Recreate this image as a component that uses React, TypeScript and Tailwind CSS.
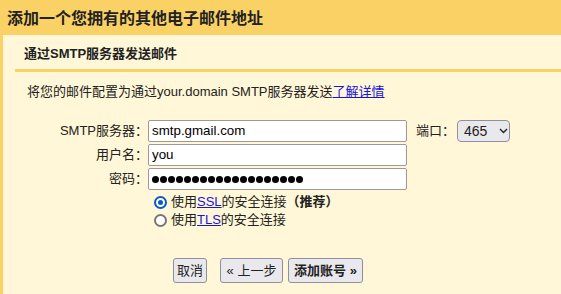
import React from "react";

const font = { fontFamily: '"Liberation Sans", Arial, "Noto Sans CJK SC", sans-serif' };

function Radio({ checked }: { checked: boolean }) {
  return checked ? (
    <span className="box-border w-[13px] h-[13px] rounded-full border-[2px] border-[#0b57d0] bg-white flex items-center justify-center shrink-0">
      <span className="block w-[5px] h-[5px] rounded-full bg-[#0b57d0]" />
    </span>
  ) : (
    <span className="box-border block w-[13px] h-[13px] rounded-full border-[2px] border-[#767676] bg-white shrink-0" />
  );
}

export default function App() {
  const lbl = "w-[145px] text-right text-[13px] text-[#222] pr-0 leading-[22px]";
  const inp =
    "box-border w-[259px] h-[22px] border border-[#999] rounded-[2px] bg-white px-[3px] text-[13.333px] text-black leading-[20px] flex items-center";
  return (
    <div className="w-[561px] h-[294px] overflow-hidden bg-[#fff7d7]" style={font}>
      <div className="h-[35px] bg-[#fad165] flex items-center pl-[7px] pt-[2px]">
        <span className="text-[16px] font-bold text-[#222] leading-[20px]">添加一个您拥有的其他电子邮件地址</span>
      </div>
      <div className="border-l-[3px] border-[#fad165] h-[259px]">
        <div className="ml-[12px] pl-[9px] pt-[10px] pb-[6px] border-b-[3px] border-[#fad165]">
          <span className="block text-[13px] font-bold text-[#222] leading-[18px]">通过SMTP服务器发送邮件</span>
        </div>
        <div className="pl-[24px] mt-[11px] text-[13px] leading-[18px] text-[#222]">
          将您的邮件配置为通过your.domain SMTP服务器发送
          <span className="underline text-[#1515e0]">了解详情</span>
        </div>
        <div className="mt-[19px] flex flex-col gap-[2px]">
          <div className="flex items-center">
            <div className={lbl}>SMTP服务器：</div>
            <div className={inp}>smtp.gmail.com</div>
            <div className="ml-[9px] text-[13px] text-[#222] leading-[22px]">端口：</div>
            <div className="box-border ml-[2px] w-[53px] h-[22px] rounded-[4px] border border-[#8f8f9d] bg-[#e9e9ed] flex items-center pl-[6px] text-[14px] text-[#222]">
              <span>465</span>
              <svg className="ml-[12px]" width="9" height="6" viewBox="0 0 9 6">
                <path d="M1 1 L4.5 4.5 L8 1" fill="none" stroke="#222" strokeWidth="1.4" />
              </svg>
            </div>
          </div>
          <div className="flex items-center">
            <div className={lbl}>用户名：</div>
            <div className={inp}>you</div>
          </div>
          <div className="flex items-center">
            <div className={lbl}>密码：</div>
            <div className={inp}>
              <span className="flex gap-[1px]">
                {Array.from({ length: 19 }).map((_, i) => (
                  <span key={i} className="block w-[7px] h-[7px] rounded-full bg-black" />
                ))}
              </span>
            </div>
          </div>
        </div>
        <div className="mt-[3px] ml-[151px] flex flex-col text-[13px] text-[#222]">
          <div className="h-[18px] flex items-center gap-[4px]">
            <Radio checked />
            <span>
              使用<span className="text-[#1515e0] underline">SSL</span>的安全连接<span className="font-bold">（推荐）</span>
            </span>
          </div>
          <div className="h-[18px] flex items-center gap-[4px]">
            <Radio checked={false} />
            <span>
              使用<span className="text-[#1515e0] underline">TLS</span>的安全连接
            </span>
          </div>
        </div>
        <div className="mt-[29px] ml-[170px] flex text-[13px] text-[#222]">
          <div className="box-border h-[25px] w-[34px] rounded-[3px] border border-[#8f8f9d] bg-[#e9e9ed] flex items-center justify-center">取消</div>
          <div className="box-border ml-[13px] h-[25px] w-[63px] rounded-[3px] border border-[#8f8f9d] bg-[#e9e9ed] flex items-center justify-center">« 上一步</div>
          <div className="box-border ml-[5px] h-[25px] w-[75px] rounded-[3px] border border-[#8f8f9d] bg-[#e9e9ed] flex items-center justify-center font-bold">添加账号 »</div>
        </div>
      </div>
    </div>
  );
}
